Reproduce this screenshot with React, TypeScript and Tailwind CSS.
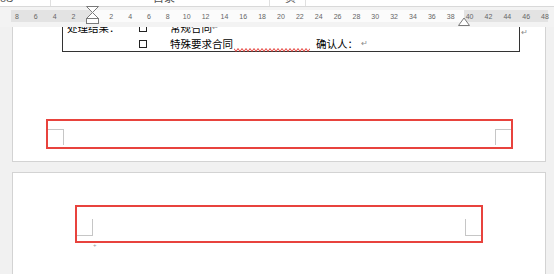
import React from 'react'

const marks = ['8', '6', '4', '2', '', '2', '4', '6', '8', '10', '12', '14', '16', '18', '20', '22', '24', '26', '28', '30', '32', '34', '36', '38', '40', '42', '44', '46', '48']

const ReturnMark = ({ className = '' }: { className?: string }) => (
    <span className={`text-[8px] leading-none text-[#8a8a8a] ${className}`}>↵</span>
)

const Checkbox = () => <span className="inline-block w-[8px] h-[8px] border border-[#222] bg-white" />

const Ruler = () => (
    <div className="relative h-[20px] bg-[#f3f3f3] pt-[3px] pl-[11px] shrink-0">
        <div className="relative flex h-[12px] w-[537px]">
            <div className="w-[81px] bg-[#e3e3e3]" />
            <div className="w-[372px] bg-[#fbfbfb]" />
            <div className="flex-1 bg-[#e3e3e3]" />
            {/* numbers */}
            <div className="absolute left-[-3.5px] top-0 flex h-full items-center">
                {marks.map((m, i) => (
                    <span key={i} className="w-[18.86px] text-center text-[7px] leading-none text-[#666]">
                        {m}
                    </span>
                ))}
            </div>
        </div>
        {/* first-line / hanging indent marker */}
        <svg className="absolute left-[86px] top-[-1px]" width="13" height="18" viewBox="0 0 13 18">
            <path d="M0.5 0.5 H12.5 L6.5 6.5 Z" fill="#fff" stroke="#7a7a7a" />
            <path d="M6.5 6.5 L0.5 12.5 H12.5 Z" fill="#fff" stroke="#7a7a7a" />
            <rect x="0.5" y="12.5" width="12" height="5" fill="#fff" stroke="#7a7a7a" />
        </svg>
        {/* right indent marker */}
        <svg className="absolute left-[458px] top-[10px]" width="12" height="9" viewBox="0 0 12 9">
            <path d="M0.5 8.5 L6 1 L11.5 8.5 Z" fill="#fff" stroke="#7a7a7a" />
        </svg>
    </div>
)

const Squiggle = () => (
    <svg width="76" height="4" viewBox="0 0 76 4" className="absolute left-0 bottom-[-3px]">
        <polyline
            points={Array.from({ length: 39 }, (_, i) => `${i * 2},${i % 2 ? 3.5 : 0.5}`).join(' ')}
            fill="none"
            stroke="#e5443f"
            strokeWidth="1"
        />
    </svg>
)

export default function App() {
    return (
        <div className="w-[554px] h-[274px] overflow-hidden bg-[#f1f1f1] flex flex-col font-['Liberation_Sans','Noto_Sans_CJK_SC',sans-serif]">
            {/* ribbon bottom edge */}
            <div className="h-[7px] shrink-0 bg-white border-b border-[#d9d9d9] flex overflow-hidden text-[11px] leading-[11px] text-[#555]">
                <span className="-mt-[7px] w-[50px]">ōS</span>
                <span className="border-l border-[#e0e0e0] w-[100px]" />
                <span className="-mt-[7px] w-[119px] pl-[3px]">目录</span>
                <span className="border-l border-[#e0e0e0] -mt-[7px] pl-[15px] w-[36px]">页</span>
                <span className="border-l border-[#e0e0e0]" />
            </div>

            <Ruler />

            {/* page 1 (tail) */}
            <div className="ml-[12px] w-[534px] h-[135px] shrink-0 bg-white border-x border-b border-[#d3d3d3] overflow-hidden">
                <div className="flex items-start -mt-[4px] pl-[49px]">
                    <div className="w-[458px] border-x border-b border-[#333] text-[10.5px] text-black leading-none">
                        <div className="flex items-center h-[14px] -translate-y-[2px]">
                            <span className="pl-[4px] w-[76px]">处理结果：</span>
                            <Checkbox />
                            <span className="pl-[23px]">常规合同</span>
                            <ReturnMark />
                        </div>
                        <div className="flex items-center h-[14px]">
                            <span className="w-[76px]" />
                            <Checkbox />
                            <span className="pl-[23px]">特殊要求合同</span>
                            <span className="relative inline-block w-[76px] h-[10px] ml-[1px]">
                                <Squiggle />
                            </span>
                            <span className="pl-[6px]">确认人：</span>
                            <ReturnMark className="ml-[3px]" />
                        </div>
                    </div>
                    <ReturnMark className="mt-[6px] ml-[1px]" />
                </div>

                <div className="ml-[33px] mt-[67px] w-[467px] h-[30px] border-2 border-[#e8433d] flex justify-between items-start pt-[8px]">
                    <div className="w-[16px] h-[16px] border-t border-r border-[#c6c6c6]" />
                    <div className="w-[16px] h-[16px] border-t border-l border-[#c6c6c6]" />
                </div>
            </div>

            {/* page 2 (head) */}
            <div className="ml-[12px] mt-[10px] w-[534px] flex-1 bg-white border-x border-t border-[#d3d3d3]">
                <div className="ml-[62px] mt-[32px] w-[408px] h-[38px] border-2 border-[#e8433d] flex justify-between items-end pb-[5px]">
                    <div className="w-[16px] h-[17px] border-r border-b border-[#c6c6c6]" />
                    <div className="w-[16px] h-[17px] border-l border-b border-[#c6c6c6]" />
                </div>
                <div className="pl-[80px] -mt-[1px] text-[6px] leading-none text-[#999]">+</div>
            </div>
        </div>
    )
}
